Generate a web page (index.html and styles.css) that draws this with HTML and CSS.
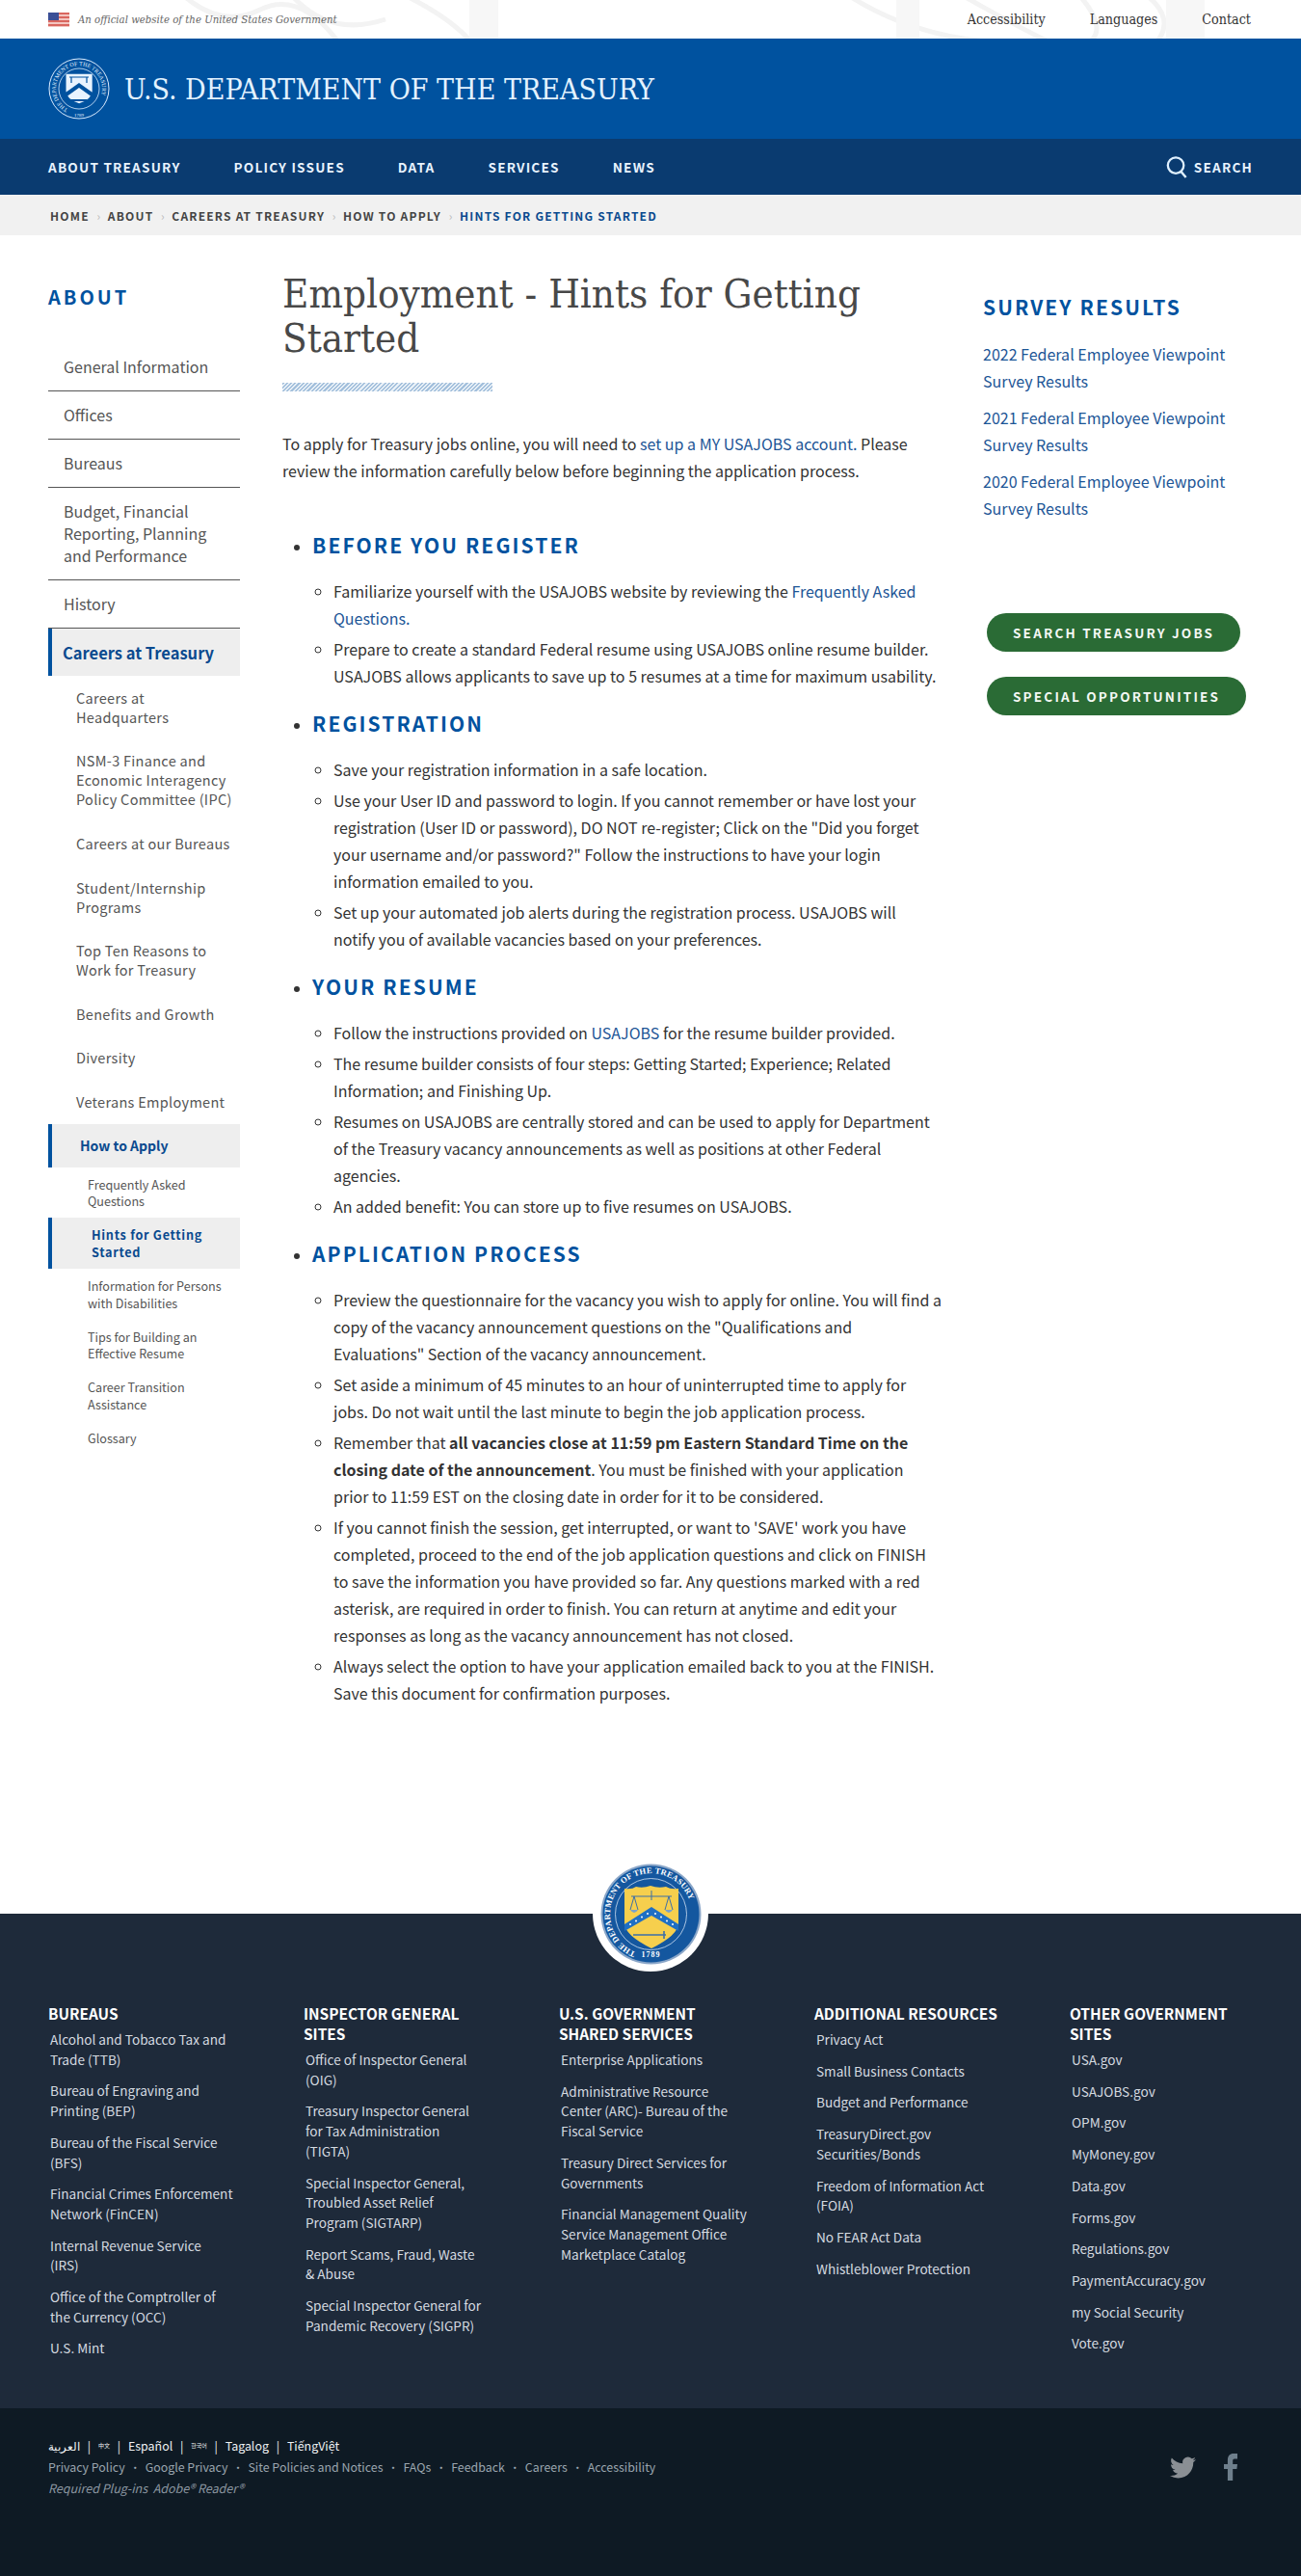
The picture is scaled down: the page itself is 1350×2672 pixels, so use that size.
FILE: index.html
```html
<!DOCTYPE html>
<html lang="en">
<head>
<meta charset="utf-8">
<title>Employment - Hints for Getting Started</title>
<link rel="stylesheet" href="styles.css">
</head>
<body>
<div class="topbar">
  <svg class="guilloche" viewBox="0 0 1350 40" aria-hidden="true">
    <g fill="none" stroke="#f3f3f3" stroke-width="5">
      <path d="M190 -5 Q230 30 270 10 T350 42"/><path d="M300 -8 Q340 40 400 20"/><path d="M420 -5 Q470 20 490 45"/>
      <path d="M880 -5 Q950 40 1040 44"/><path d="M1000 -4 Q1060 30 1090 44"/><path d="M1120 -5 Q1150 30 1130 44"/><path d="M1190 -5 Q1220 20 1200 44"/>
    </g>
    <g fill="#f7f7f7"><rect x="487" y="0" width="30" height="40"/><rect x="930" y="0" width="24" height="40"/><rect x="1210" y="0" width="40" height="40"/></g>
  </svg>
  <div class="official">
    <svg class="flag" viewBox="0 0 22 15" aria-hidden="true">
      <rect width="22" height="15" fill="#f3c5c0"/>
      <rect y="0" width="22" height="2" fill="#d9665f"/><rect y="4" width="22" height="2" fill="#d9665f"/><rect y="8" width="22" height="2" fill="#d9665f"/><rect y="12" width="22" height="2" fill="#d9665f"/>
      <rect width="11" height="8" fill="#3b4f96"/>
    </svg>
    <span>An official website of the United States Government</span>
  </div>
  <nav class="toplinks"><a>Accessibility</a><a>Languages</a><a>Contact</a></nav>
</div>

<header class="masthead">
  <svg class="mast-seal" viewBox="0 0 64 64" aria-hidden="true">
    <defs><path id="mring" d="M32 56 A24 24 0 1 1 32.01 56"/></defs>
    <circle cx="32" cy="32" r="31" fill="none" stroke="#dcecff" stroke-width="1"/>
    <circle cx="32" cy="32" r="21" fill="none" stroke="#dcecff" stroke-width=".8"/>
    <text class="mast-ring" fill="#e6f3ff"><textPath href="#mring" startOffset="8%">THE DEPARTMENT OF THE TREASURY</textPath></text>
    <path d="M15 16 H49 V38 Q49 48 32 54 Q15 48 15 38Z" fill="#e8f3ff" transform="translate(6.5 4) scale(.8)"/>
    <path d="M18 36 L32 26 L46 36 V41 L32 31 L18 41Z" fill="#00529f"/>
    <path d="M22 20 H42 M24 20 V26 M40 20 V26" stroke="#00529f" stroke-width="1.2" fill="none"/>
    <path d="M24 44 H40" stroke="#00529f" stroke-width="2"/>
    <text class="mast-year" x="32" y="61" fill="#e6f3ff" text-anchor="middle">1789</text>
  </svg>
  <div class="mast-title">U.S. DEPARTMENT OF THE TREASURY</div>
</header>

<nav class="mainnav">
  <div class="mainnav-links"><a>ABOUT TREASURY</a><a>POLICY ISSUES</a><a>DATA</a><a>SERVICES</a><a>NEWS</a></div>
  <a class="search">
    <svg viewBox="0 0 24 24" aria-hidden="true"><circle cx="10.5" cy="10" r="8.6" fill="none" stroke="#dff0ff" stroke-width="2.4"/><path d="M16 16.5 L21.5 23" stroke="#dff0ff" stroke-width="2.6" fill="none"/></svg>
    SEARCH
  </a>
</nav>

<div class="crumbs">
  <a>HOME</a><i>›</i><a>ABOUT</a><i>›</i><a>CAREERS AT TREASURY</a><i>›</i><a>HOW TO APPLY</a><i>›</i><a class="current">HINTS FOR GETTING STARTED</a>
</div>

<div class="content">
  <aside class="sidebar">
    <h2 class="side-title">ABOUT</h2>
    <ul class="side-top">
      <li>General Information</li>
      <li>Offices</li>
      <li>Bureaus</li>
      <li>Budget, Financial Reporting, Planning and Performance</li>
      <li>History</li>
    </ul>
    <div class="side-active">Careers at Treasury</div>
    <ul class="side-l2">
      <li>Careers at Headquarters</li>
      <li>NSM-3 Finance and Economic Interagency Policy Committee (IPC)</li>
      <li>Careers at our Bureaus</li>
      <li>Student/Internship Programs</li>
      <li>Top Ten Reasons to Work for Treasury</li>
      <li>Benefits and Growth</li>
      <li>Diversity</li>
      <li>Veterans Employment</li>
    </ul>
    <div class="side-active2">How to Apply</div>
    <ul class="side-l3">
      <li>Frequently Asked Questions</li>
      <li class="on">Hints for Getting Started</li>
      <li>Information for Persons with Disabilities</li>
      <li>Tips for Building an Effective Resume</li>
      <li>Career Transition Assistance</li>
      <li>Glossary</li>
    </ul>
  </aside>

  <main class="article">
    <h1>Employment - Hints for Getting Started</h1>
    <div class="stripe"></div>
    <p class="intro">To apply for Treasury jobs online, you will need to <a>set up a MY USAJOBS account.</a> Please review the information carefully below before beginning the application process.</p>
    <ul class="sections">
      <li>
        <h2>BEFORE YOU REGISTER</h2>
        <ul>
          <li>Familiarize yourself with the USAJOBS website by reviewing the <a>Frequently Asked Questions.</a></li>
          <li>Prepare to create a standard Federal resume using USAJOBS online resume builder. USAJOBS allows applicants to save up to 5 resumes at a time for maximum usability.</li>
        </ul>
      </li>
      <li>
        <h2>REGISTRATION</h2>
        <ul>
          <li>Save your registration information in a safe location.</li>
          <li>Use your User ID and password to login. If you cannot remember or have lost your registration (User ID or password), DO NOT re-register; Click on the "Did you forget your username and/or password?" Follow the instructions to have your login information emailed to you.</li>
          <li>Set up your automated job alerts during the registration process. USAJOBS will<br>notify you of available vacancies based on your preferences.</li>
        </ul>
      </li>
      <li>
        <h2>YOUR RESUME</h2>
        <ul>
          <li>Follow the instructions provided on <a>USAJOBS</a> for the resume builder provided.</li>
          <li>The resume builder consists of four steps: Getting Started; Experience; Related<br>Information; and Finishing Up.</li>
          <li>Resumes on USAJOBS are centrally stored and can be used to apply for Department<br>of the Treasury vacancy announcements as well as positions at other Federal<br>agencies.</li>
          <li>An added benefit: You can store up to five resumes on USAJOBS.</li>
        </ul>
      </li>
      <li>
        <h2>APPLICATION PROCESS</h2>
        <ul>
          <li>Preview the questionnaire for the vacancy you wish to apply for online. You will find a copy of the vacancy announcement questions on the "Qualifications and<br>Evaluations" Section of the vacancy announcement.</li>
          <li>Set aside a minimum of 45 minutes to an hour of uninterrupted time to apply for<br>jobs. Do not wait until the last minute to begin the job application process.</li>
          <li>Remember that <strong>all vacancies close at 11:59 pm Eastern Standard Time on the closing date of the announcement</strong>. You must be finished with your application<br>prior to 11:59 EST on the closing date in order for it to be considered.</li>
          <li>If you cannot finish the session, get interrupted, or want to 'SAVE' work you have completed, proceed to the end of the job application questions and click on FINISH<br>to save the information you have provided so far. Any questions marked with a red asterisk, are required in order to finish. You can return at anytime and edit your responses as long as the vacancy announcement has not closed.</li>
          <li>Always select the option to have your application emailed back to you at the FINISH. Save this document for confirmation purposes.</li>
        </ul>
      </li>
    </ul>
  </main>

  <aside class="rail">
    <h2>SURVEY RESULTS</h2>
    <ul class="rail-links">
      <li>2022 Federal Employee Viewpoint Survey Results</li>
      <li>2021 Federal Employee Viewpoint Survey Results</li>
      <li>2020 Federal Employee Viewpoint Survey Results</li>
    </ul>
    <div class="rail-btns"><a class="btn">SEARCH TREASURY JOBS</a><a class="btn">SPECIAL OPPORTUNITIES</a></div>
  </aside>
</div>

<footer>
  <div class="foot-seal">
    <svg viewBox="0 0 105 105" aria-hidden="true">
      <defs><path id="ring" d="M52.5 95 A42.5 42.5 0 1 1 52.51 95"/></defs>
      <circle cx="52.5" cy="52.5" r="52" fill="#8aa6c8"/>
      <circle cx="52.5" cy="52.5" r="50" fill="#14579f"/>
      <circle cx="52.5" cy="52.5" r="37" fill="none" stroke="#cfe0f2" stroke-width=".8"/>
      <text class="seal-ring" fill="#fff"><textPath href="#ring" startOffset="6%">THE DEPARTMENT OF THE TREASURY</textPath></text>
      <path d="M25 26 Q33 27 37 24 Q44 26 52 23 Q60 26 68 24 Q73 27 81 26 V62 Q81 74 53 88 Q25 74 25 62Z" fill="#f6cf4d"/>
      <path d="M25 63 L53 45 L81 63 V70 L53 54 L25 70Z" fill="#1f6fc4"/>
      <g fill="#fff"><circle cx="31" cy="63" r="1"/><circle cx="37" cy="59.5" r="1"/><circle cx="43" cy="55.5" r="1"/><circle cx="49" cy="52" r="1"/><circle cx="57" cy="52" r="1"/><circle cx="63" cy="55.5" r="1"/><circle cx="69" cy="59.5" r="1"/><circle cx="75" cy="63" r="1"/></g>
      <path d="M32 34 H74 M53 28 V38 M35 34 L31 48 M35 34 L39 48 M71 34 L67 48 M71 34 L75 48" stroke="#3d6fa8" stroke-width="1" fill="none"/>
      <path d="M31 48 Q35 54 39 48Z M67 48 Q71 54 75 48Z" fill="#7aa2c8"/>
      <path d="M34 74 H68 M66 70 V78" stroke="#3d6fa8" stroke-width="1.6" fill="none"/>
      <text class="seal-year" x="52.5" y="97" fill="#fff" text-anchor="middle">1789</text>
    </svg>
  </div>
  <div class="foot-main">
    <div class="foot-col">
      <h3>BUREAUS</h3>
      <ul>
        <li>Alcohol and Tobacco Tax and Trade (TTB)</li>
        <li>Bureau of Engraving and Printing (BEP)</li>
        <li>Bureau of the Fiscal Service (BFS)</li>
        <li>Financial Crimes Enforcement<br>Network (FinCEN)</li>
        <li>Internal Revenue Service<br>(IRS)</li>
        <li>Office of the Comptroller of the Currency (OCC)</li>
        <li>U.S. Mint</li>
      </ul>
    </div>
    <div class="foot-col">
      <h3>INSPECTOR GENERAL SITES</h3>
      <ul>
        <li>Office of Inspector General (OIG)</li>
        <li>Treasury Inspector General<br>for Tax Administration<br>(TIGTA)</li>
        <li>Special Inspector General,<br>Troubled Asset Relief<br>Program (SIGTARP)</li>
        <li>Report Scams, Fraud, Waste<br>&amp; Abuse</li>
        <li>Special Inspector General for Pandemic Recovery (SIGPR)</li>
      </ul>
    </div>
    <div class="foot-col">
      <h3>U.S. GOVERNMENT SHARED SERVICES</h3>
      <ul>
        <li>Enterprise Applications</li>
        <li>Administrative Resource Center (ARC)- Bureau of the Fiscal Service</li>
        <li>Treasury Direct Services for Governments</li>
        <li>Financial Management Quality<br>Service Management Office<br>Marketplace Catalog</li>
      </ul>
    </div>
    <div class="foot-col">
      <h3>ADDITIONAL RESOURCES</h3>
      <ul>
        <li>Privacy Act</li>
        <li>Small Business Contacts</li>
        <li>Budget and Performance</li>
        <li>TreasuryDirect.gov Securities/Bonds</li>
        <li>Freedom of Information Act (FOIA)</li>
        <li>No FEAR Act Data</li>
        <li>Whistleblower Protection</li>
      </ul>
    </div>
    <div class="foot-col">
      <h3>OTHER GOVERNMENT SITES</h3>
      <ul>
        <li>USA.gov</li>
        <li>USAJOBS.gov</li>
        <li>OPM.gov</li>
        <li>MyMoney.gov</li>
        <li>Data.gov</li>
        <li>Forms.gov</li>
        <li>Regulations.gov</li>
        <li>PaymentAccuracy.gov</li>
        <li>my Social Security</li>
        <li>Vote.gov</li>
      </ul>
    </div>
  </div>
  <div class="foot-bottom">
    <div class="foot-text">
      <div class="langs"><a>العربية</a><i>|</i><a class="cjk">中文</a><i>|</i><a>Español</a><i>|</i><a class="cjk">한국어</a><i>|</i><a>Tagalog</a><i>|</i><a>TiếngViệt</a></div>
      <div class="policies"><a>Privacy Policy</a><i>•</i><a>Google Privacy</a><i>•</i><a>Site Policies and Notices</a><i>•</i><a>FAQs</a><i>•</i><a>Feedback</a><i>•</i><a>Careers</a><i>•</i><a>Accessibility</a></div>
      <div class="plugins">Required Plug-ins&nbsp; Adobe® Reader®</div>
    </div>
    <div class="social">
      <svg class="tw" viewBox="0 0 24 24" aria-hidden="true"><path d="M23.95 4.57a10 10 0 0 1-2.82.77 4.96 4.96 0 0 0 2.16-2.72c-.95.55-2 .96-3.13 1.2a4.92 4.92 0 0 0-8.38 4.48C7.69 8.09 4.07 6.13 1.64 3.16a4.9 4.9 0 0 0 1.52 6.57 4.9 4.9 0 0 1-2.23-.61v.06a4.92 4.92 0 0 0 3.95 4.83 5 5 0 0 1-2.21.08 4.94 4.94 0 0 0 4.6 3.42A9.87 9.87 0 0 1 0 19.54a13.94 13.94 0 0 0 7.55 2.21c9.05 0 14-7.5 14-13.98 0-.21 0-.42-.02-.63A10 10 0 0 0 24 4.59z"/></svg>
      <svg class="fb" viewBox="0 0 14 28" aria-hidden="true"><path d="M14 5.5h-3c-1.2 0-1.8.7-1.8 2V11H14l-.6 5H9.2v12H3.9V16H0v-5h3.900V7C3.900 2.500 6.200 0 10 0h4z"/></svg>
    </div>
  </div>
</footer>
</body>
</html>
```

FILE: styles.css
```css
* { box-sizing: border-box; }
html, body { margin: 0; padding: 0; }
body {
  width: 1350px;
  font-family: "Noto Sans CJK SC", "Noto Sans", sans-serif;
  font-size: 16px;
  color: #333;
  background: #fff;
}
ul { margin: 0; padding: 0; list-style: none; }
h1, h2, h3, p { margin: 0; }
a { color: inherit; text-decoration: none; }
i { font-style: normal; }

.topbar {
  position: relative;
  height: 40px;
  padding: 0 52px 0 50px;
  display: flex;
  align-items: center;
  justify-content: space-between;
  overflow: hidden;
  font-family: "DejaVu Serif Condensed", "DejaVu Serif", serif;
}
.guilloche { position: absolute; left: 0; top: 0; width: 1350px; height: 40px; }
.official { position: relative; display: flex; align-items: center; gap: 9px; font-size: 11.3px; font-style: italic; color: #666; }
.flag { width: 22px; height: 15px; }
.toplinks { position: relative; display: flex; gap: 46px; font-size: 14.2px; color: #333; }

.masthead {
  height: 104px;
  background: #00529f;
  padding: 20px 50px;
  display: flex;
  align-items: center;
  gap: 15px;
}
.mast-seal { width: 64px; height: 64px; flex: none; }
.mast-ring { font: 6px "Liberation Serif", serif; }
.mast-year { font: 5px "Liberation Serif", serif; }
.mast-title {
  font-family: "DejaVu Serif Condensed", "DejaVu Serif", serif;
  font-size: 30px;
  color: #e3f2ff;
  white-space: nowrap;
}

.mainnav {
  height: 58px;
  background: #0a3b70;
  padding: 0 50px;
  display: flex;
  align-items: center;
  justify-content: space-between;
  color: #e8f3ff;
  font-size: 13.6px;
  font-weight: 700;
  letter-spacing: 1.2px;
}
.mainnav-links { display: flex; gap: 55px; }
.search { display: flex; align-items: center; gap: 6px; }
.search svg { width: 23px; height: 23px; }

.crumbs {
  height: 42px;
  background: #f1f1f1;
  padding: 0 52px;
  display: flex;
  align-items: center;
  font-size: 12px;
  font-weight: 700;
  letter-spacing: 1.2px;
  color: #444;
}
.crumbs i { width: 19px; text-align: center; color: #bbb; font-weight: 400; letter-spacing: 0; }
.crumbs .current { color: #0a4a8f; }

.content {
  min-height: 1741px;
  padding: 0 50px;
  display: grid;
  grid-template-columns: 199px 692px 280px;
  column-gap: 44px;
  align-items: start;
}
.content > .rail { margin-left: -9px; }

.sidebar { padding-top: 49px; color: #555; }
.side-title { font-size: 20px; line-height: 30px; font-weight: 700; letter-spacing: 3px; color: #00529f; margin-bottom: 33px; }
.side-top li { padding: 13px 16px; font-size: 16px; line-height: 23px; border-bottom: 1px solid #555; }
.side-active {
  height: 49px;
  border-left: 4px solid #00529f;
  background: #eee;
  padding-left: 11px;
  display: flex;
  align-items: center;
  font-size: 16.5px;
  font-weight: 700;
  color: #0a4a8f;
}
.side-l2 li { padding: 12.8px 4px 12.8px 29px; font-size: 14.5px; line-height: 20px; letter-spacing: .3px; }
.side-active2 {
  height: 45px;
  border-left: 4px solid #00529f;
  background: #eee;
  padding-left: 29px;
  display: flex;
  align-items: center;
  font-size: 14px;
  font-weight: 700;
  color: #0a4a8f;
}
.side-l3 li { padding: 8.75px 10px 8.75px 41px; font-size: 12.6px; line-height: 17.5px; }
.side-l3 li.on {
  padding: 8.5px 24px 8.5px 41px;
  border-left: 4px solid #00529f;
  background: #eee;
  font-size: 12.7px;
  line-height: 18px;
  font-weight: 700;
  letter-spacing: .7px;
  color: #0a4a8f;
}

.article { padding-top: 38px; }
.article a, .rail-links { color: #1c5596; }
h1 {
  font-family: "DejaVu Serif Condensed", "DejaVu Serif", serif;
  font-weight: 400;
  font-size: 41.7px;
  line-height: 46px;
  color: #484848;
}
.stripe {
  width: 218px;
  height: 9px;
  margin-top: 23px;
  background: repeating-linear-gradient(135deg, #a4c0dc 0 1.5px, #e8f0f7 1.5px 3px);
}
.intro { margin-top: 40px; font-size: 16px; line-height: 28px; }
.sections { margin-top: 48px; padding-left: 31px; list-style: disc; }
.sections > li { margin-bottom: 20px; }
.sections h2 { font-size: 21px; line-height: 30px; font-weight: 700; letter-spacing: 2.1px; color: #00529f; margin-bottom: 19px; }
.sections ul { padding-left: 22px; list-style: circle; }
.sections ul li { font-size: 16px; line-height: 28px; margin-bottom: 4px; }
.sections ul li:last-child { margin-bottom: 0; }
.sections strong { font-weight: 700; }

.rail { padding-top: 59px; }
.rail h2 { font-size: 21px; line-height: 30px; font-weight: 700; letter-spacing: 2.1px; color: #00529f; margin-bottom: 20px; }
.rail-links li { font-size: 16px; line-height: 28px; margin-bottom: 10px; }
.rail-btns { margin: 95px 0 0 4px; display: flex; flex-direction: column; align-items: flex-start; gap: 26px; }
.btn {
  height: 40px;
  padding: 0 27px;
  border-radius: 20px;
  background: #2a6b35;
  color: #f4f8f4;
  display: flex;
  align-items: center;
  font-size: 13.5px;
  font-weight: 700;
  letter-spacing: 2.2px;
}

footer { position: relative; }
.foot-seal {
  position: absolute;
  left: 615px;
  top: -60px;
  width: 120px;
  height: 120px;
  padding: 7.5px;
  border-radius: 50%;
  background: #fff;
}
.foot-seal svg { display: block; width: 105px; height: 105px; }
.seal-ring { font: 700 8.6px "Liberation Serif", serif; letter-spacing: .2px; }
.seal-year { font: 700 8px "Liberation Serif", serif; letter-spacing: 1px; }
.foot-main {
  height: 513px;
  background: #1e2a3a;
  padding: 93px 50px 0;
  display: flex;
  gap: 69px;
  color: #d5dae0;
}
.foot-col { width: 196px; flex: none; }
.foot-col h3 { width: 192px; font-size: 15.4px; line-height: 21px; font-weight: 700; color: #fff; margin-bottom: 6px; }
.foot-col li { padding-left: 2px; font-size: 13.6px; line-height: 20.7px; margin-bottom: 12px; }

.foot-bottom {
  height: 174px;
  background: #0e1a24;
  padding: 28px 66px 0 50px;
  display: flex;
  justify-content: space-between;
  align-items: flex-start;
  font-size: 12.4px;
  line-height: 22px;
}
.langs { color: #eef1f3; display: flex; }
.langs i { width: 19px; text-align: center; }
.langs .cjk { font-size: 6px; }
.policies { color: #9aa5ae; display: flex; }
.policies i { width: 21px; text-align: center; font-size: 11px; }
.plugins { color: #8b96a0; font-style: italic; font-size: 12.5px; }
.social { display: flex; align-items: center; gap: 28px; padding-top: 19px; }
.tw { width: 29px; height: 27px; fill: #8a8f94; }
.fb { width: 14px; height: 28px; fill: #6e7f8c; }
```
